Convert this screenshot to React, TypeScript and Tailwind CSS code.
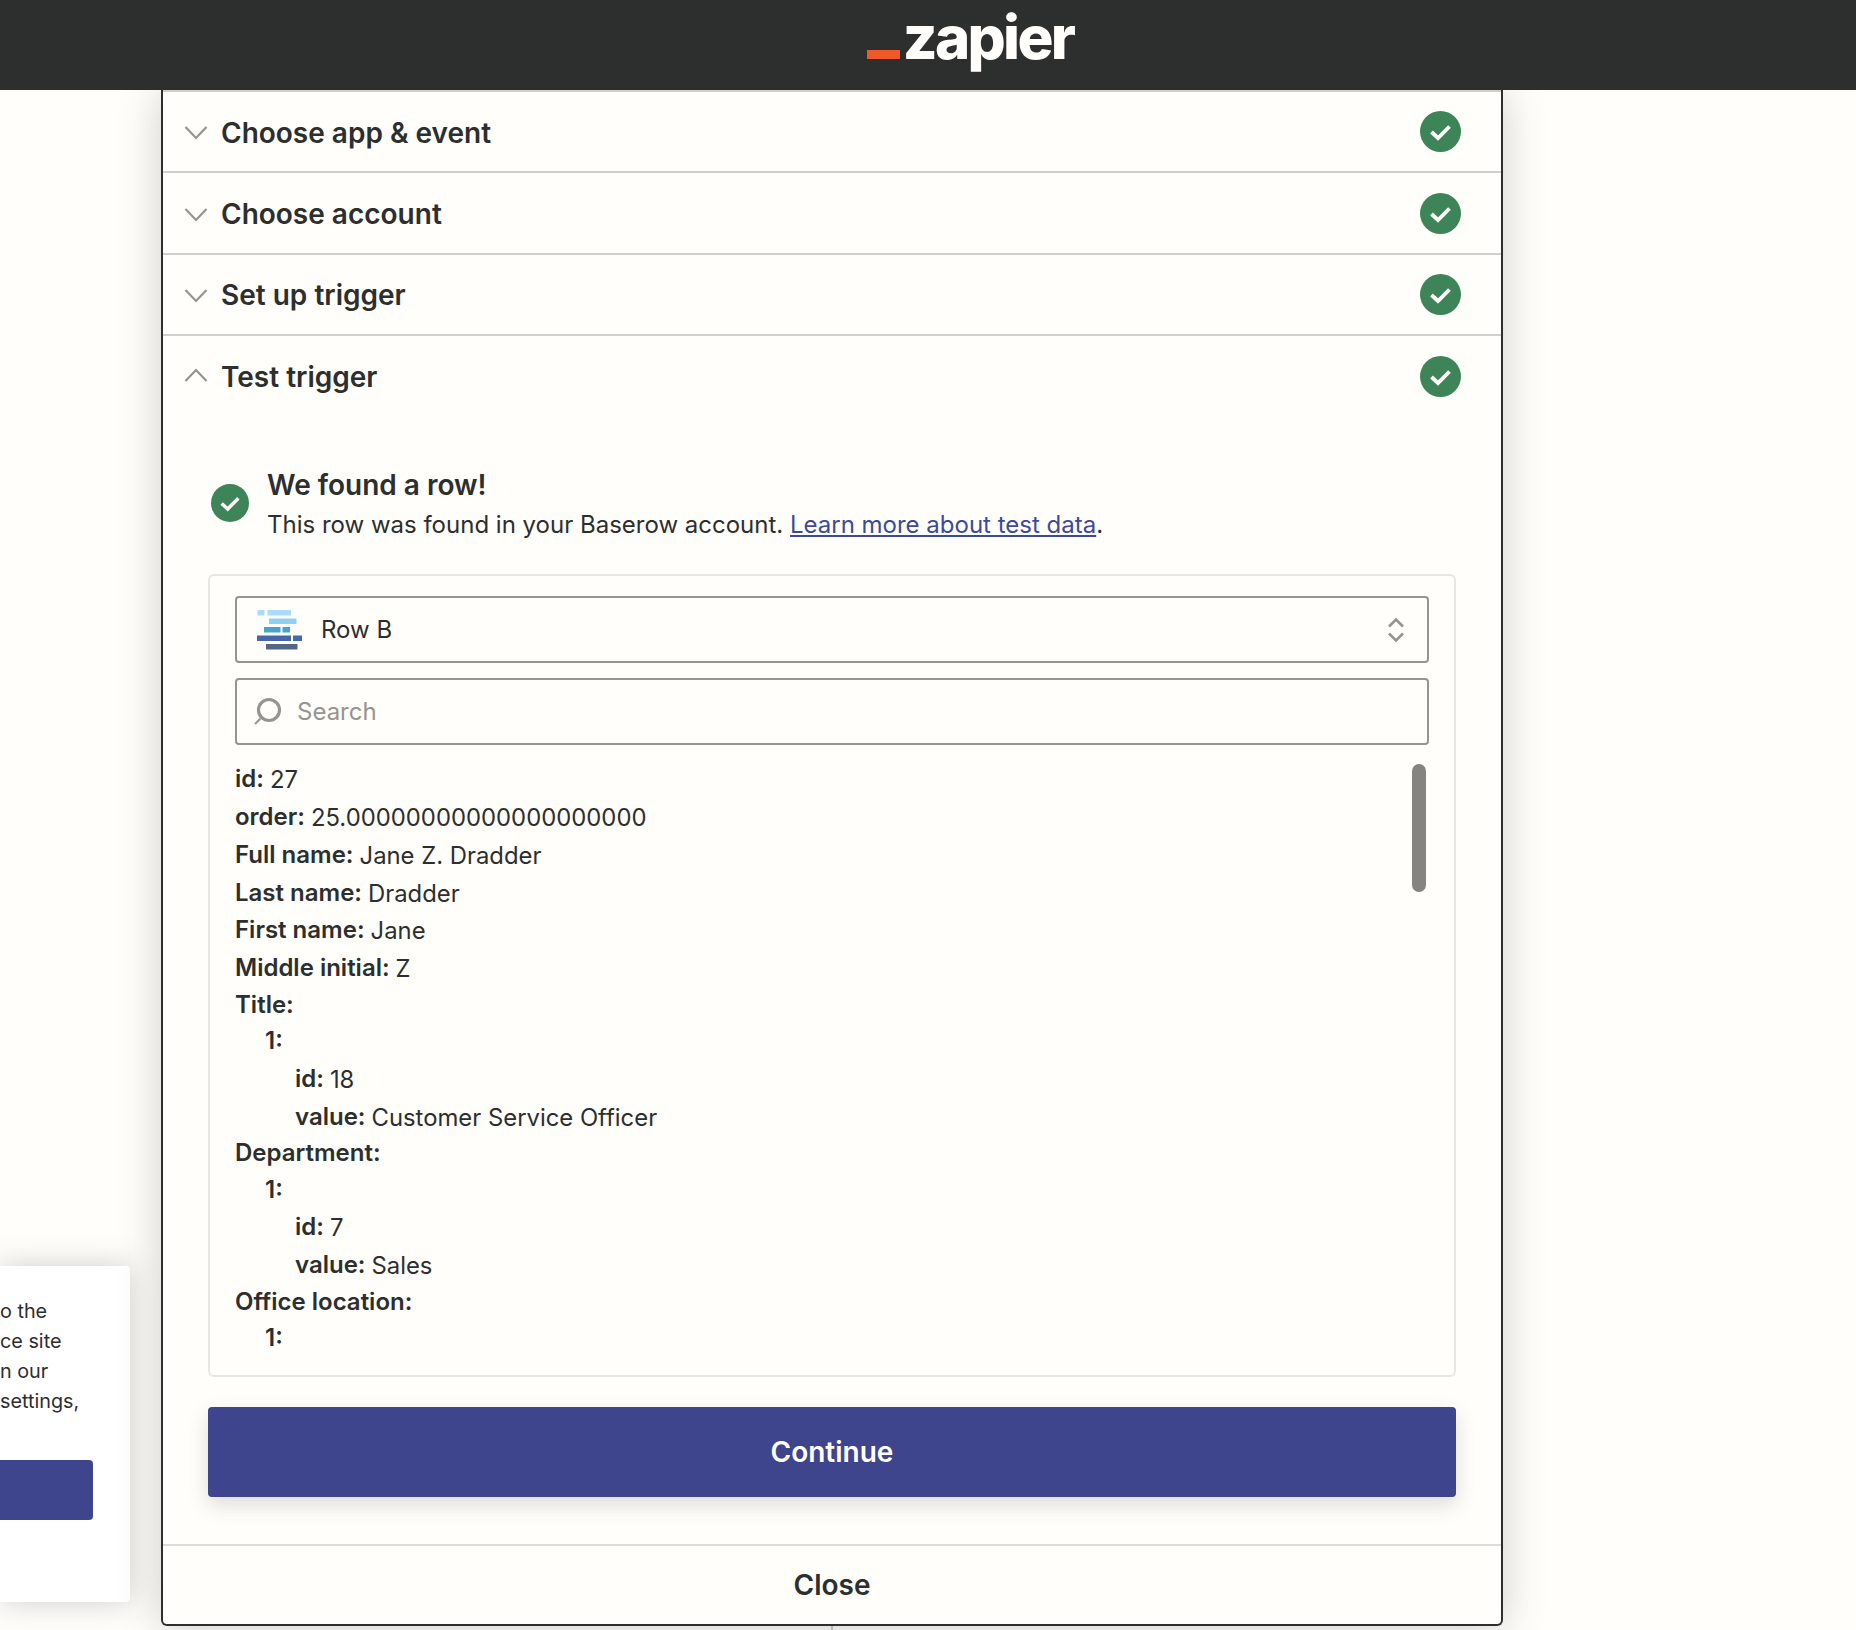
const FONT = "font-['Inter',sans-serif]";

// Green circle with a white tick
function Check({ size }: { size: number }) {
  return (
    <svg width={size} height={size} viewBox="0 0 41 41" className="shrink-0">
      <circle cx="20.5" cy="20.5" r="20.5" fill="#3d8558" />
      <path d="M11.5 21 L18 27 L29.5 15.5" fill="none" stroke="#fffefb" strokeWidth="3.8" />
    </svg>
  );
}

function Chevron({ open }: { open?: boolean }) {
  return (
    <svg width="24" height="14" viewBox="0 0 24 14" fill="none" stroke="#95948f" strokeWidth="2.2" className={`shrink-0 ${open ? "-mt-[3px]" : "mt-[3px]"}`}>
      <path d={open ? "M1.5 13 L12 2 L22.5 13" : "M1.5 1 L12 12 L22.5 1"} />
    </svg>
  );
}

function BaserowLogo() {
  return (
    <svg width="46" height="40" viewBox="0 0 46 40" className="shrink-0">
      <rect x="0.5" y="0" width="7" height="5.5" fill="#a9dcf8" />
      <rect x="10.5" y="0" width="23.5" height="5.5" fill="#a9dcf8" />
      <rect x="12" y="8.5" width="27.5" height="5.5" fill="#8ed1f6" />
      <rect x="7" y="17" width="16.5" height="5.5" fill="#46a3c9" />
      <rect x="25.5" y="17" width="7.5" height="5.5" fill="#46a3c9" />
      <rect x="0" y="25.5" width="34" height="5.5" fill="#4468a8" />
      <rect x="36" y="25.5" width="9" height="5.5" fill="#4468a8" />
      <rect x="9" y="34" width="31.5" height="5.5" fill="#556680" />
    </svg>
  );
}

function StepRow({ title, open }: { title: string; open?: boolean }) {
  return (
    <div className={`flex items-center pl-[21px] pr-[40px] ${open ? "h-[80px]" : "h-[81.4px] border-b-2 border-[#d0cfcc]"}`}>
      <Chevron open={open} />
      <span className="ml-[13px] pt-[2px] flex-1 text-[28px] font-semibold text-[#2d2e2e]">{title}</span>
      <Check size={41} />
    </div>
  );
}

const rows: { label: string; value?: string; depth: number }[] = [
  { label: "id:", value: "27", depth: 0 },
  { label: "order:", value: "25.00000000000000000000", depth: 0 },
  { label: "Full name:", value: "Jane Z. Dradder", depth: 0 },
  { label: "Last name:", value: "Dradder", depth: 0 },
  { label: "First name:", value: "Jane", depth: 0 },
  { label: "Middle initial:", value: "Z", depth: 0 },
  { label: "Title:", depth: 0 },
  { label: "1:", depth: 1 },
  { label: "id:", value: "18", depth: 2 },
  { label: "value:", value: "Customer Service Officer", depth: 2 },
  { label: "Department:", depth: 0 },
  { label: "1:", depth: 1 },
  { label: "id:", value: "7", depth: 2 },
  { label: "value:", value: "Sales", depth: 2 },
  { label: "Office location:", depth: 0 },
  { label: "1:", depth: 1 },
];

const indent = ["pl-0", "pl-[30px]", "pl-[60px]"];

export default function App() {
  return (
    <div className={`${FONT} relative h-[1630px] w-full overflow-hidden bg-[#fffefb] text-[#2d2e2e]`}>
      <header className="relative z-20 flex h-[90px] items-center justify-center bg-[#2d2e2e]">
        <div className="flex items-end ml-[84px] pb-[16px]">
          <div className="h-[8.5px] w-[33px] mb-[18.5px] bg-[#f0582a]" />
          <span className="ml-[3px] text-[60px] leading-[80px] font-extrabold tracking-[-0.045em] text-[#fffefb]">zapier</span>
        </div>
      </header>

      {/* connector line behind the panel, only its end shows */}
      <div className="absolute left-[831px] top-[1626px] h-[4px] w-[2px] z-20 bg-[#b9b8b4]" />

      {/* Step panel */}
      <div className="relative z-10 ml-[161px] w-[1342px] h-[1536px] flex flex-col rounded-b-[6px] border-2 border-t-0 border-[#2d2e2e] bg-[#fffefb] shadow-[0_3px_40px_rgba(70,65,55,0.25)]">
        <div className="border-t-2 border-[#d0cfcc]">
          <StepRow title="Choose app & event" />
          <StepRow title="Choose account" />
          <StepRow title="Set up trigger" />
          <StepRow title="Test trigger" open />
        </div>

        <div className="flex-1 px-[45px] flex flex-col">
          <div className="flex items-center mt-[49px] pl-[3px]">
            <div className="-mt-[3px] ">
              <Check size={38} />
            </div>
            <div className="ml-[18px]">
              <div className="text-[28px] leading-[41px] font-semibold">We found a row!</div>
              <div className="pt-[1px] text-[24px] leading-[36px]">
                This row was found in your Baserow account.{" "}
                <span className="text-[#3b4a9a] underline">Learn more about test data</span>.
              </div>
            </div>
          </div>

          <div className="mt-[31px] h-[803px] rounded-[6px] border-2 border-[#e7e6e2] px-[25px] pt-[20px] overflow-hidden flex flex-col">
            <div className="flex h-[67px] shrink-0 items-center rounded-[4px] border-2 border-[#95948f] pl-[20px] pr-[22px]">
              <BaserowLogo />
              <span className="ml-[18px] flex-1 text-[24px]">Row B</span>
              <svg width="18" height="26" viewBox="0 0 18 26" fill="none" stroke="#95948f" strokeWidth="2.6">
                <path d="M2 9.5 L9 2.5 L16 9.5" />
                <path d="M2 16.5 L9 23.5 L16 16.5" />
              </svg>
            </div>
            <div className="mt-[15px] flex h-[67px] shrink-0 items-center rounded-[4px] border-2 border-[#95948f] pl-[15px]">
              <svg width="30" height="30" viewBox="0 0 30 30" fill="none" stroke="#95948f" strokeWidth="3.2" className="shrink-0">
                <circle cx="17" cy="13" r="10.5" />
                <path d="M8.5 21.5 L3 27" strokeWidth="2" />
              </svg>
              <span className="ml-[15px] text-[24px] text-[#95948f]">Search</span>
            </div>

            <div className="relative mt-[15px] flex-1">
              {rows.map((r, i) => (
                <div key={i} className={`text-[24px] whitespace-nowrap ${indent[r.depth]} ${r.value ? "h-[37.8px] leading-[37.8px]" : "h-[36.4px] leading-[36.4px]"}`}>
                  <span className="font-semibold">{r.label}</span>
                  {r.value ? <span className="relative top-[1px] ml-[6px] text-[23.85px]">{r.value}</span> : null}
                </div>
              ))}
              <div className="absolute right-[3px] top-[4px] h-[128px] w-[14px] rounded-full bg-[#858480]" />
            </div>
          </div>

          <div className="mt-[30px] flex h-[90px] items-center justify-center rounded-[4px] bg-[#3f458c] text-[28px] font-semibold text-[#fffefb] shadow-[0_8px_20px_rgba(70,65,55,0.18)]">
            Continue
          </div>
        </div>

        <div className="flex h-[80px] shrink-0 items-center justify-center border-t-2 border-[#dcdbd7] text-[28px] font-semibold">
          Close
        </div>
      </div>

      {/* Cookie card, cut off by the left edge of the window */}
      <div className="absolute left-0 top-[1266px] h-[336px] w-[130px] rounded-r-[4px] bg-white shadow-[0_0_30px_rgba(70,65,55,0.25)]">
        <div className="mt-[30px] text-[19.8px] leading-[30px] whitespace-nowrap">
          <div>o the</div>
          <div>ce site</div>
          <div>n our</div>
          <div>settings,</div>
        </div>
        <div className="mt-[44px] h-[60px] w-[93px] rounded-r-[4px] bg-[#3f458c]" />
      </div>
    </div>
  );
}
